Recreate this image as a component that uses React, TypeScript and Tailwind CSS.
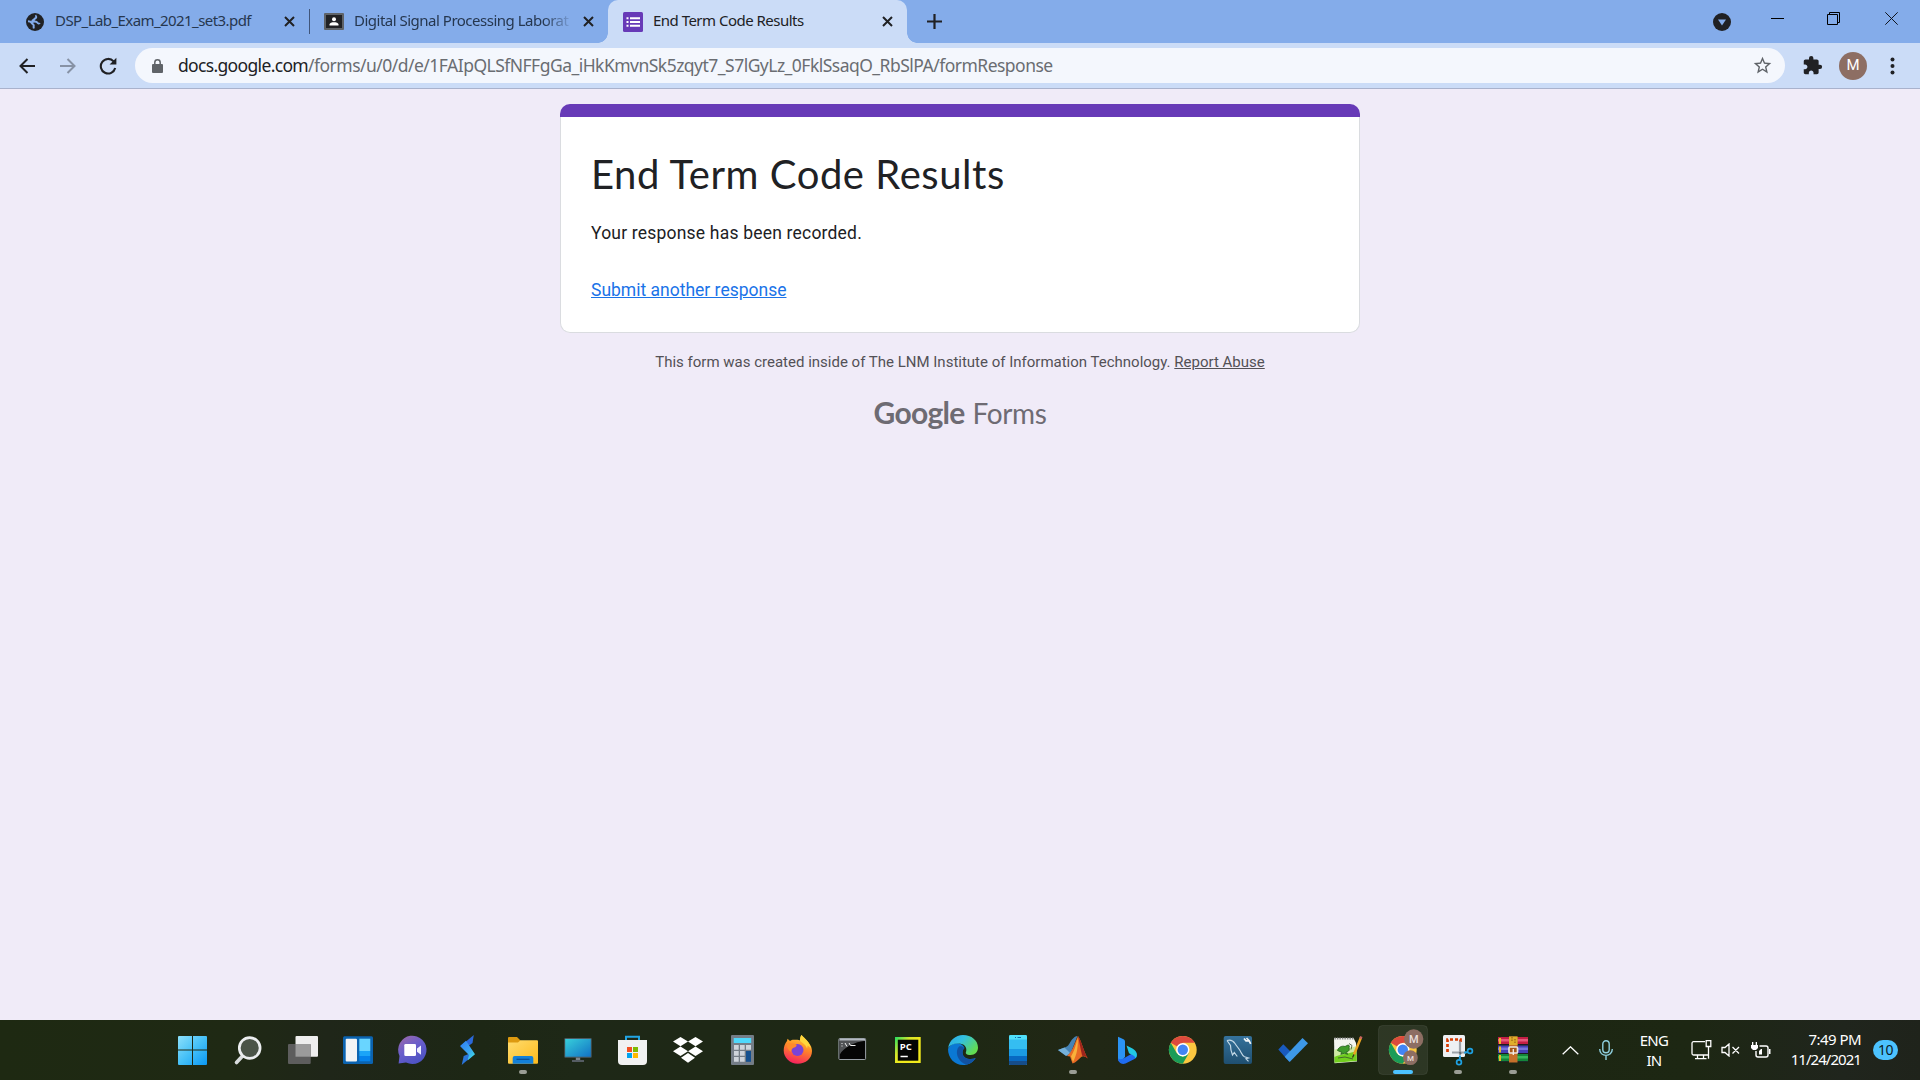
import type { ReactNode } from "react";

const segoe = "font-['Noto_Sans','Open_Sans',sans-serif]";

function CloseX() {
  return (
    <svg viewBox="0 0 11 11" className="h-[11px] w-[11px] shrink-0" stroke="#202124" strokeWidth="2">
      <path d="M1 1l9 9M10 1l-9 9" />
    </svg>
  );
}

function TabStrip() {
  return (
    <div className={`flex h-[43px] items-stretch bg-[#84acea] text-[15px] text-[#26374f] ${segoe}`}>
      <div className="flex w-[309px] items-center pl-[26px]">
        <svg viewBox="0 0 18 18" className="h-[18px] w-[18px] shrink-0">
          <circle cx="9" cy="9" r="9" fill="#202124" />
          <path
            d="M10.500 2.300C9 3 11.500 4.500 9.500 5.300 8 5.800 8.300 7 7 7.300c-1.200.3-.6 1.500.5 1.400 1.500-.2 3.300-.2 3.800 1 .5 1.100 2 .4 2.400 1.500M2 8.300c1.500 0 3 .4 3.700 1.700.6 1.200 2 1 2 2.300 0 1.200-.3 1.900.2 3.200"
            fill="none"
            stroke="#84acea"
            strokeWidth="2"
          />
        </svg>
        <span className="ml-[11px] w-[220px] whitespace-nowrap pb-[3px] tracking-[-0.57px]">
          DSP_Lab_Exam_2021_set3.pdf
        </span>
        <div className="ml-[9px]"><CloseX /></div>
      </div>
      <div className="mt-[9px] h-[25px] w-px bg-[#40557a]" />
      <div className="flex w-[298px] items-center pl-[14px]">
        <svg viewBox="0 0 20 17" className="h-[17px] w-5 shrink-0">
          <rect width="20" height="17" rx="1" fill="#5f6368" />
          <rect x="2" y="2" width="16" height="13" fill="#202124" />
          <circle cx="10" cy="6.200" r="2" fill="#fff" />
          <path d="M5.500 12.500v-1c0-1.700 2.500-2.300 4.500-2.300s4.500.6 4.500 2.300v1z" fill="#fff" />
        </svg>
        <span className="ml-[10px] w-[220px] overflow-hidden whitespace-nowrap pb-[3px] tracking-[-0.5px] [mask-image:linear-gradient(to_right,#000_86%,transparent)]">
          Digital Signal Processing Laborat
        </span>
        <div className="ml-[9px]"><CloseX /></div>
      </div>
      <div className="relative flex w-[299px] items-center rounded-t-[10px] bg-[#cbdcf7] pl-[15px] text-[#202124]">
        <div className="absolute -left-[10px] bottom-0 h-[10px] w-[10px] bg-[radial-gradient(circle_at_0_0,transparent_9.5px,#cbdcf7_10px)]" />
        <div className="absolute -right-[10px] bottom-0 h-[10px] w-[10px] bg-[radial-gradient(circle_at_100%_0,transparent_9.5px,#cbdcf7_10px)]" />
        <svg viewBox="0 0 20 20" className="h-5 w-5 shrink-0">
          <rect width="20" height="20" rx="1.500" fill="#673ab7" />
          <path d="M7 5.200h10v2H7zM7 9h10v2H7zM7 12.800h10v2H7zM3.500 5.200h2v2h-2zM3.500 9h2v2h-2zM3.500 12.800h2v2h-2z" fill="#fff" />
        </svg>
        <span className="ml-[10px] w-[220px] whitespace-nowrap pb-[3px] tracking-[-0.52px]">End Term Code Results</span>
        <div className="ml-[9px]"><CloseX /></div>
      </div>
      <svg viewBox="0 0 15 15" className="ml-[20px] mt-[14px] h-[15px] w-[15px]" stroke="#202124" strokeWidth="2.200">
        <path d="M7.500 0v15M0 7.500h15" />
      </svg>
      <svg viewBox="0 0 18 18" className="ml-auto mr-[40px] mt-[12.500px] h-[18px] w-[18px]">
        <circle cx="9" cy="9" r="9" fill="#202124" />
        <path d="M5 6.500h8l-4 6z" fill="#84acea" />
      </svg>
      <svg viewBox="0 0 13 13" className="mr-[43px] mt-[12px] h-[13px] w-[13px]" fill="#000">
        <rect y="6" width="13" height="1" />
      </svg>
      <svg viewBox="0 0 13 13" className="mr-[45px] mt-[12px] h-[13px] w-[13px]" fill="none" stroke="#000">
        <path d="M.5 2.500h10v10H.500zM2.500 2.500v-2h10v10h-2" />
      </svg>
      <svg viewBox="0 0 13 13" className="mr-[22px] mt-[12px] h-[13px] w-[13px]" fill="none" stroke="#10151d">
        <path d="M.3.3l12.400 12.400M12.700.3L.3 12.700" />
      </svg>
    </div>
  );
}

function Toolbar() {
  return (
    <div className="flex h-[45px] items-center bg-[#cbdcf7]">
      <svg viewBox="0 0 16 16" className="ml-[19px] h-4 w-4" fill="none" stroke="#202124" strokeWidth="2">
        <path d="M16 8H1.500M8.500 1L1.500 8l7 7" />
      </svg>
      <svg viewBox="0 0 16 16" className="ml-[25px] h-4 w-4" fill="none" stroke="#8792a5" strokeWidth="2">
        <path d="M0 8h14.500M7.500 1l7 7-7 7" />
      </svg>
      <svg viewBox="0 0 18 18" className="ml-[23px] h-[18px] w-[18px]">
        <path d="M14.600 4.400A7.300 7.300 0 1 0 16.200 11" fill="none" stroke="#202124" strokeWidth="2.100" />
        <path d="M17.400.8v6.800h-6.800z" fill="#202124" />
      </svg>
      <div className={`ml-[18px] flex h-[35px] w-[1650px] items-center rounded-full bg-[#f4f7fd] pl-[17px] pr-[12px] text-[17.5px] text-[#6a6d72] ${segoe}`}>
        <svg viewBox="0 0 11 14" className="h-[14px] w-[11px]">
          <path d="M2.800 6V3.500a2.700 2.700 0 0 1 5.400 0V6" fill="none" stroke="#5f6368" strokeWidth="1.500" />
          <rect y="5" width="11" height="9" rx="1" fill="#5f6368" />
        </svg>
        <span className="ml-[15px] whitespace-nowrap pb-px tracking-[-0.520px]">
          <span className="tracking-[-0.660px] text-[#202124]">docs.google.com</span>
          /forms/u/0/d/e/1FAIpQLSfNFFgGa_iHkKmvnSk5zqyt7_S7lGyLz_0FklSsaqO_RbSlPA/formResponse
        </span>
        <svg viewBox="0 0 24 24" className="ml-auto h-[21px] w-[21px]" fill="#5f6368">
          <path d="M22 9.240l-7.190-.62L12 2 9.190 8.630 2 9.240l5.460 4.730L5.820 21 12 17.270 18.180 21l-1.630-7.030L22 9.240zM12 15.400l-3.760 2.270 1-4.280-3.320-2.880 4.380-.38L12 6.100l1.710 4.040 4.380.38-3.320 2.880 1 4.280L12 15.400z" />
        </svg>
      </div>
      <svg viewBox="0 0 24 24" className="ml-[17px] h-[21px] w-[21px]" fill="#202124">
        <path d="M20.500 11H19V7c0-1.100-.9-2-2-2h-4V3.500a2.500 2.500 0 0 0-5 0V5H4c-1.100 0-1.990.9-1.990 2v3.800H3.500c1.490 0 2.700 1.210 2.700 2.700s-1.210 2.700-2.700 2.700H2V20c0 1.100.9 2 2 2h3.800v-1.500c0-1.490 1.210-2.700 2.700-2.700s2.700 1.210 2.700 2.700V22H17c1.100 0 2-.9 2-2v-4h1.500a2.500 2.500 0 0 0 0-5z" />
      </svg>
      <div className="ml-[16px] flex h-7 w-7 items-center justify-center rounded-full bg-[#8d6e63] font-['Roboto',sans-serif] text-[15px] text-white">
        M
      </div>
      <svg viewBox="0 0 4 18" className="ml-[23px] h-[18px] w-[5px]" fill="#202124">
        <circle cx="2" cy="2.500" r="2" />
        <circle cx="2" cy="9" r="2" />
        <circle cx="2" cy="15.500" r="2" />
      </svg>
    </div>
  );
}

function FormPage() {
  return (
    <main className="flex min-h-0 flex-1 flex-col items-center border-t border-[#a9b2cc] bg-[#f0ebf8] pt-[15px] font-['Roboto',sans-serif]">
      <section className="flex h-[229px] w-[800px] flex-col">
        <div className="h-[13px] rounded-t-[10px] bg-[#673ab7]" />
        <div className="flex-1 rounded-b-[10px] border border-t-0 border-[#dadce0] bg-white px-[30px] pt-[32px]">
          <h1 className="whitespace-nowrap font-['Lato',sans-serif] text-[40px] leading-[50px] tracking-[0.55px] text-[#202124]">
            End Term Code Results
          </h1>
          <p className="mt-[22px] text-[17.5px] leading-[25px] tracking-[0.2px] text-[#202124]">
            Your response has been recorded.
          </p>
          <p className="mt-[32px] text-[17.5px] leading-[25px] text-[#1a73e8]">
            <a className="underline">Submit another response</a>
          </p>
        </div>
      </section>
      <p className="mt-[19px] text-[15px] leading-[20px] text-[#535156]">
        This form was created inside of The LNM Institute of Information Technology.{" "}
        <a className="underline">Report Abuse</a>
      </p>
      <div className="mt-[20px] flex items-baseline gap-[8px] font-['Lato',sans-serif] leading-[40px] text-[#6e6b73]">
        <span className="text-[30px] font-bold tracking-[-0.700px]">Google</span>
        <span className="text-[28px] tracking-[-0.4px]">Forms</span>
      </div>
    </main>
  );
}

/* Every taskbar glyph is drawn in its own 55x60 cell. */
function Chrome() {
  return (
    <g>
      <circle cx="27.800" cy="29.800" r="13.900" fill="#fbc740" />
      <path d="M27.800 29.800L15.760 22.850A13.900 13.900 0 0 1 39.840 22.850H27.800z" fill="#dc4a3d" />
      <path d="M15.760 22.850A13.900 13.900 0 0 0 27.800 43.700L33.800 33.300 27.800 36.800 21.800 33.300z" fill="#1a9c58" />
      <circle cx="27.800" cy="29.800" r="6.700" fill="#fff" />
      <circle cx="27.800" cy="29.800" r="5.200" fill="#4285f4" />
    </g>
  );
}

const icons: { art: ReactNode; mark?: "open" | "active" }[] = [
  {
    art: (
      <path
        d="M13 17a1 1 0 0 1 1-1h13v13.500H13zM28 16h13a1 1 0 0 1 1 1v12.500H28zM13 30.500h14V45H14a1 1 0 0 1-1-1zM28 30.500h14V44a1 1 0 0 1-1 1H28z"
        fill="url(#win)"
      />
    ),
  },
  {
    art: (
      <g>
        <path d="M22.500 36L16.500 42.500" stroke="#d9dcdd" strokeWidth="3.600" strokeLinecap="round" />
        <circle cx="29.700" cy="28" r="10.400" fill="#4b5448" stroke="#eceef0" strokeWidth="2.700" />
      </g>
    ),
  },
  {
    art: (
      <g>
        <rect x="20.500" y="16" width="22.500" height="20.700" rx="1" fill="#eeeeee" />
        <rect x="13" y="24" width="22.700" height="20" rx="1" fill="#5d5d5d" />
        <path d="M20.500 24h15.200v12.700H20.500z" fill="#9b9b9b" />
      </g>
    ),
  },
  {
    art: (
      <g>
        <rect x="13" y="16.200" width="30" height="27.800" rx="1.500" fill="#0b63b0" />
        <rect x="15.700" y="18.700" width="11.300" height="22.700" rx="1" fill="#f1f3f5" />
        <path d="M29.300 18.700h11V31h-11z" fill="#69d5ff" />
        <path d="M29.300 31h11v5h-11z" fill="#1ba5f8" />
        <path d="M29.300 36h11v5.300h-11z" fill="#0583ec" />
      </g>
    ),
  },
  {
    art: (
      <g>
        <path d="M13.600 43.500l.9-7.500A14.200 14.200 0 1 1 21 42.600z" fill="url(#chat)" />
        <rect x="19.300" y="24" width="11.700" height="12" rx="1.300" fill="#fff" />
        <path d="M32 28.500l4-3v9.300l-4-3z" fill="#eef0ff" />
      </g>
    ),
  },
  {
    art: (
      <g>
        <path d="M33.800 15l-1.300 8-5 3.700-6-1.500z" fill="#2b68d8" />
        <path d="M21.700 45l2-9 6-2.500 4.500.8z" fill="#2a75da" />
        <path d="M20 26l6-5.300 9 13.600-7.500 6.200 1.500-5.500z" fill="url(#bolt)" />
      </g>
    ),
  },
  {
    mark: "open",
    art: (
      <g>
        <path d="M13 18a1 1 0 0 1 1-1h8l3.500 3.500V25H13z" fill="#dd9a10" />
        <path d="M13 22.500h10l2.500-2.200H42a1 1 0 0 1 1 1v21.400a1 1 0 0 1-1 1H14a1 1 0 0 1-1-1z" fill="url(#folder)" />
        <path d="M17.700 43.700V38a2 2 0 0 1 2-2h16.600a2 2 0 0 1 2 2v5.700z" fill="#1380d8" />
        <path d="M21.500 39.300h13" stroke="#0a4c92" strokeWidth="1.200" />
      </g>
    ),
  },
  {
    art: (
      <g>
        <path d="M25.800 37h4.400v4h-4.400z" fill="#7d858b" />
        <path d="M22 40h12v2H22z" fill="#555c63" />
        <rect x="14.300" y="18" width="27.400" height="19.700" rx="1" fill="#4a5961" />
        <rect x="15.200" y="19" width="25.600" height="17.700" fill="url(#screen)" />
      </g>
    ),
  },
  {
    art: (
      <g>
        <path d="M21 21v-4.300h13V21" fill="none" stroke="#22a5e4" strokeWidth="2" />
        <path d="M13 20h29v21a4 4 0 0 1-4 4H17a4 4 0 0 1-4-4z" fill="#f1f1f1" />
        <path d="M22 27h5v5h-5z" fill="#f25022" />
        <path d="M28 27h5v5h-5z" fill="#7fba00" />
        <path d="M22 33h5v5h-5z" fill="#00a4ef" />
        <path d="M28 33h5v5h-5z" fill="#ffb900" />
      </g>
    ),
  },
  {
    art: (
      <path
        d="M20.500 17l7.500 4.500-7.500 4.700-7.500-4.700zM35.500 17l7.500 4.500-7.500 4.700-7.500-4.700zM20.500 26.600l7.500 4.600-7.500 4.700-7.500-4.700zM35.500 26.600l7.500 4.600-7.500 4.700-7.500-4.700zM28 33l7 4.700-7 5-7-5z"
        fill="#fff"
      />
    ),
  },
  {
    art: (
      <g>
        <rect x="16" y="15" width="23" height="30" rx="1" fill="#747d87" />
        <path d="M18.700 18h17.500v5H18.700z" fill="#4fd8fb" />
        <path d="M19 25h4.700v4.700H19zM25 25h4.700v4.700H25zM31 25h5v4.700h-5zM19 31h4.700v4.700H19zM25 31h4.700v4.700H25zM19 37h4.700v4.700H19zM25 37h4.700v4.700H25z" fill="#ced4db" />
        <path d="M31 31h5v10.800h-5z" fill="#15508f" />
      </g>
    ),
  },
  {
    art: (
      <g>
        <path d="M31.500 15c1 1.500 4.500 4.500 7 7.500 2.500 3 3.500 5.800 3.500 8.500 0 7.500-6.300 12.700-14.200 12.700S13.700 37.700 13.700 30.500c0-4 1.300-7 3.300-9.500l.5-2.300 2.500 2.300c1.500-1.300 3-1.500 4.500-1.300 3-.2 5 .3 5.500.5 0-2 .5-4 1.500-5.200z" fill="url(#fox)" />
        <circle cx="27.500" cy="30" r="6" fill="#7a43d6" />
        <path d="M17 23c3 1.500 6-.5 9 1.500 1.500 1 0 2.800-2.500 3.300-1.500.8-2.500 2-2.300 4-3-1-4.700-5-4.200-8.800z" fill="#ff8a2b" />
        <path d="M31.500 15c3 3.500 8.500 6.500 9.500 14-1-2-2.500-3-3.500-3.500 0 1.300 0 2-.5 3-.8-3.500-4.500-5.500-6.800-7.500-.3-2 .3-4.500 1.300-6z" fill="#ffd63c" />
      </g>
    ),
  },
  {
    art: (
      <g>
        <rect x="13.900" y="18.500" width="26.700" height="21" rx=".8" fill="#050505" stroke="#9aa1a8" />
        <path d="M14.500 19h25.600v1.800H14.500z" fill="#b4bac2" />
        <path d="M14.500 20.800h25.600C30 22 19 27 14.500 35z" fill="#515356" />
        <path d="M16.500 23.500h1M16.500 26h1M20 23l2 3.500M24 23l1.500 2.500h5" stroke="#f2f2f2" fill="none" />
      </g>
    ),
  },
  {
    art: (
      <g>
        <rect x="15" y="17" width="25.700" height="26" fill="url(#pc)" />
        <rect x="17.800" y="19.700" width="20.500" height="21" fill="#040504" />
        <text x="19.800" y="29.800" fontSize="9.500" fontWeight="700" fill="#fff" fontFamily="Open Sans, sans-serif">PC</text>
        <path d="M20.500 36.500h7.300" stroke="#fff" strokeWidth="1.500" />
      </g>
    ),
  },
  {
    art: (
      <g>
        <path d="M13 29c0 9 6.500 16 15 16 5.500 0 10-2.500 12.700-7-5 2.300-13.200 1-13.200-5.500 0-2 .8-3.500 2-4.500-2-6-13-7-16.500 1z" fill="#0b78d4" />
        <path d="M13.200 28C14.200 20.500 20.500 15 28 15c8.500 0 15 5.500 15 12.500 0 4.500-3 7.500-7.500 7.500-4 0-5.300-1.500-4.500-3 1.300-3-.5-8-6.500-8.500-5-.5-9.300 1-11.300 4.500z" fill="url(#edge)" />
        <path d="M24 26.500c-4.500 5-2 15 7.500 18.200 4-.8 7.300-3.300 9.200-6.700-5 2.300-13.200 1-13.200-5.500 0-2 .8-3.500 2-4.500-1.500-1.500-3.500-2-5.500-1.500z" fill="#1152a3" />
      </g>
    ),
  },
  {
    art: (
      <g>
        <rect x="19" y="15" width="18" height="30" rx="1.300" fill="#50e0fb" />
        <path d="M19 19.500h18V29H19z" fill="#35bdf1" />
        <path d="M19 29h18v7H19z" fill="#1b9be4" />
        <path d="M19 36h18v5H19z" fill="#0869c2" />
        <path d="M19 41h18v3a1 1 0 0 1-1 1H20a1 1 0 0 1-1-1z" fill="#164d8a" />
        <path d="M25 17.500h1M27.500 17.500h3.500" stroke="#1268a8" />
      </g>
    ),
  },
  {
    mark: "open",
    art: (
      <g>
        <path d="M13 30l8-3c2.500-.7 3.500-4 6-7.500 1.800-2 3.500-3.300 5.500-3.500l-7 17.500-3.500 2.500z" fill="#4683b5" />
        <path d="M13 30l6.500-2.500L25 33l-4 3z" fill="#74b0da" />
        <path d="M33 16c3 3.500 5.500 15 9.700 22.500-3-2.500-4.500-3-6.500-1.500-3 2.500-5 5.500-8.700 6.500l-2.500-7-3-.5c4.500-3 7.500-12 11-20z" fill="#e76a25" />
        <path d="M33 16c3 3.500 5.500 15 9.700 22.500-3-2.500-4.500-3-5.500-2.500C35.500 29 34.500 22 33 16z" fill="#9e241c" />
        <path d="M32.500 18c1 7-.5 17-4.500 24l-2-5.500c3-5 5-11 6.500-18.500z" fill="#f9b13a" />
      </g>
    ),
  },
  {
    art: (
      <g>
        <path d="M18 16.700l5.500 2.500c1 .5 1.500 1.300 1.500 2.500v15L21 42c-2 0-3-1.500-3-3z" fill="#2b93f3" />
        <path d="M18 38c0 4.500 3.500 7 7.500 5.500L34.500 39c3-2 3-5.500 1-7.500l-12 7c-2.500 1-5 1-5.500-.5z" fill="#1f6cf0" />
        <path d="M26.500 25.500l6 3c4 2 5.800 7 3 10-.3-2-1.500-2.700-3.500-3.700l-3-1.500z" fill="#22c9e4" />
      </g>
    ),
  },
  { art: <Chrome /> },
  {
    art: (
      <g>
        <rect x="13.700" y="16" width="28.300" height="28" rx="2" fill="url(#sql)" />
        <path d="M17 20.500c3-1 6 0 8 3 1.500 2.500 3.500 4.500 5 7 1.500 2.500 2 5 4.500 6.200l4 1.300-2.500.8 2.500 2.500M17 20.500l3.500 5c0 3 .5 6 2 9.500l1.800-2.500 3 4" fill="none" stroke="#c4d9e7" strokeWidth="1.200" />
        <path d="M34 18.500l2 2.300h3.200l1.500 3M36.500 18l2.500 2.500" stroke="#f1f5f8" strokeWidth="1.700" fill="none" />
      </g>
    ),
  },
  {
    art: (
      <g>
        <path d="M13.300 29.500l5-5.300L29 35l-5 6.500z" fill="#195abe" />
        <path d="M24.700 42l-5-5.300L37.500 18l5.500 5.300z" fill="#3d98e8" />
      </g>
    ),
  },
  {
    art: (
      <g>
        <path d="M14 18h19.500l2.500 5 1 18.500L14.500 43.300z" fill="#f4f6f0" />
        <path d="M14.400 36c6-3 14-3 22.200-6l.3 11-22.400 1.800z" fill="#72cf1f" />
        <path d="M14.300 30c6-3 14-1 21.900-4l.3 5c-8 3-16 3-22.100 6z" fill="#cdeaa0" />
        <path d="M14.400 18.500h19" stroke="#8b8d8b" strokeDasharray="1.500 1" strokeWidth="2" />
        <path d="M17.500 30.500c1-3.500 4.500-5 7.500-4l3-1.500c1.300 0 1.800 1.500 1 2.800 1 2.500-.8 4-3 4.500l1.800 2-3.500-1-3.500 1 1-2z" fill="#3f9b2a" stroke="#1e5916" strokeWidth=".8" />
        <path d="M18 38l7-1 8 2M29 23.500l3 2-1 4" stroke="#38512d" fill="none" strokeWidth=".8" />
        <path d="M41 17.500l-7 17" stroke="#e9a320" strokeWidth="2.500" />
        <path d="M41.300 16.500l-.8 2.200" stroke="#c7635f" strokeWidth="2.500" />
        <path d="M34 34.500l-1.500 3" stroke="#3a2c19" strokeWidth="1.300" />
      </g>
    ),
  },
  {
    mark: "active",
    art: (
      <g>
        <rect x="3.500" y="5.500" width="49" height="49" rx="4" fill="#fff" fillOpacity=".08" stroke="#fff" strokeOpacity=".07" />
        <Chrome />
        <circle cx="38.700" cy="19" r="9.700" fill="#8d6e63" />
        <circle cx="35.400" cy="37.700" r="7.400" fill="#8d6e63" />
        <g fill="#e9dfdb" textAnchor="middle" fontFamily="Roboto, sans-serif">
          <text x="38.700" y="23" fontSize="11" fontWeight="500">M</text>
          <text x="35.400" y="40.700" fontSize="8" fontWeight="500">M</text>
        </g>
      </g>
    ),
  },
  {
    mark: "open",
    art: (
      <g>
        <rect x="13" y="15" width="22" height="22" rx="1.500" fill="#eef0f3" />
        <path d="M17.500 32v-12.500H30.500V23" fill="none" stroke="#d83b01" strokeWidth="2.700" strokeDasharray="3 2" />
        <path d="M30 21.500V35M22 32.500h14" stroke="#9da3aa" strokeWidth="2.200" />
        <path d="M29.500 33.500l1.500-1" stroke="#5f666d" strokeWidth="2.500" />
        <circle cx="40" cy="31" r="2.400" fill="none" stroke="#1fa1e2" strokeWidth="1.700" />
        <circle cx="29" cy="42.300" r="2.400" fill="none" stroke="#1fa1e2" strokeWidth="1.700" />
        <path d="M37.700 32l-3.500.7M29.700 40l.3-4.500" stroke="#1fa1e2" strokeWidth="2" />
      </g>
    ),
  },
  {
    mark: "open",
    art: (
      <g>
        <path d="M13 17h30v8H13z" fill="#c41f45" />
        <path d="M13 19h30v2.500H13z" fill="#e5597a" />
        <path d="M13 25.500h30v8H13z" fill="#4540b5" />
        <path d="M13 27.500h30V30H13z" fill="#7673dc" />
        <path d="M13 34h30v8H13z" fill="#14863a" />
        <path d="M13 36h30v2.500H13z" fill="#37b65c" />
        <path d="M13 24.500h30M13 33.500h30M13 41.700h30" stroke="#1d1a24" />
        <path d="M15 18v6M15 26.500v6M15 35v6" stroke="#e8b929" strokeWidth="2" />
        <path d="M24 16.500h8.500v26H24z" fill="#c5702a" />
        <path d="M24 16.500h8.500V25H24z" fill="#e0ae2b" />
        <path d="M27 17v5M30 19v5" stroke="#8a5210" strokeDasharray="1.500 1" />
        <rect x="24" y="27" width="8.500" height="6" rx="1" fill="#a65718" stroke="#e9e6df" strokeWidth="1.700" />
        <path d="M28.300 29v6" stroke="#f4f0e8" strokeWidth="1.300" />
      </g>
    ),
  },
];

function Defs() {
  return (
    <svg className="h-0 w-0 shrink-0">
      <defs>
        <linearGradient id="win" gradientUnits="userSpaceOnUse" x1="13" y1="16" x2="42" y2="45">
          <stop stopColor="#8de0fb" /><stop offset=".5" stopColor="#45c0f7" /><stop offset="1" stopColor="#0a98f5" />
        </linearGradient>
        <linearGradient id="chat" x1="0" y1="0" x2=".6" y2="1">
          <stop stopColor="#a26aa5" /><stop offset=".5" stopColor="#6a5ecb" /><stop offset="1" stopColor="#4d53c4" />
        </linearGradient>
        <linearGradient id="bolt" x1="0" y1="0" x2="1" y2="1">
          <stop stopColor="#2f7df0" /><stop offset=".55" stopColor="#3aa4f2" /><stop offset="1" stopColor="#3fe8df" />
        </linearGradient>
        <linearGradient id="folder" x1="0" y1="0" x2="1" y2="1">
          <stop stopColor="#ffdc6e" /><stop offset="1" stopColor="#fdba1c" />
        </linearGradient>
        <linearGradient id="screen" x1="0" y1="0" x2="1" y2="1">
          <stop stopColor="#37cfdb" /><stop offset="1" stopColor="#1272c4" />
        </linearGradient>
        <linearGradient id="fox" x1=".7" y1="0" x2=".4" y2="1">
          <stop stopColor="#ffd53a" /><stop offset=".45" stopColor="#ff8a27" /><stop offset="1" stopColor="#f5215e" />
        </linearGradient>
        <linearGradient id="pc" x1="0" y1="0" x2=".6" y2=".5">
          <stop stopColor="#21e063" /><stop offset=".6" stopColor="#d6e62a" /><stop offset="1" stopColor="#f1ea1c" />
        </linearGradient>
        <linearGradient id="edge" x1="0" y1="0" x2="1" y2=".6">
          <stop stopColor="#2aa9e6" /><stop offset=".45" stopColor="#33c0e0" /><stop offset="1" stopColor="#63dc50" />
        </linearGradient>
        <linearGradient id="sql" x1="0" y1="0" x2="0" y2="1">
          <stop stopColor="#35729c" /><stop offset="1" stopColor="#1f4f70" />
        </linearGradient>
      </defs>
    </svg>
  );
}

function Taskbar() {
  return (
    <footer
      className={`flex h-[60px] items-center bg-[linear-gradient(90deg,#1e2912_0%,#1f2914_12%,#1f2619_17%,#1d2715_25%,#1e2817_30%,#1e2814_50%,#212715_57%,#1c2612_75%,#1d2713_88%,#20251d_96%,#1f231b_100%)] pl-[165px] text-[15px] leading-[20px] text-white ${segoe}`}
    >
      <Defs />
      {icons.map((icon, i) => (
        <svg key={i} viewBox="0 0 55 60" className="h-[60px] w-[55px] shrink-0">
          {icon.art}
          {icon.mark === "open" && <rect x="24" y="50" width="8" height="4" rx="2" fill="#9a9d95" />}
          {icon.mark === "active" && <rect x="18" y="50" width="20" height="4" rx="2" fill="#4cc2ff" />}
        </svg>
      ))}
      <svg viewBox="0 0 17 9" className="ml-[22px] h-[9px] w-[17px]" fill="none" stroke="#fff" strokeWidth="1.300">
        <path d="M.7 8.300l7.800-7.500 7.800 7.500" />
      </svg>
      <svg viewBox="0 0 14 20" className="ml-[20px] h-5 w-[14px]" fill="none" stroke="#8fd0df" strokeWidth="1.400">
        <rect x="3.800" y=".7" width="6.400" height="12" rx="3.200" />
        <path d="M.7 9c0 8.500 12.600 8.500 12.600 0M7 15.500V20" />
      </svg>
      <div className="-mt-px ml-[24px] w-[34px] text-center tracking-[-0.7px]">
        <div>ENG</div>
        <div>IN</div>
      </div>
      <svg viewBox="0 0 21 20" className="ml-[20px] h-5 w-[21px]" fill="none" stroke="#fff" strokeWidth="1.300">
        <path d="M14 1.700H2.500a1.500 1.500 0 0 0-1.500 1.500v10.300a1.500 1.500 0 0 0 1.500 1.500H18M6.500 15v3.500M12.500 15v3.500M4 18.700h11.500M15.200.7h4.600v5.800h-4.600zM17.500 6.500v12.200" />
      </svg>
      <svg viewBox="0 0 19 14" className="ml-[9px] h-[14px] w-[19px]" fill="none" stroke="#fff" strokeWidth="1.300">
        <path d="M1 4.500h3L8 1v12L4 9.500H1zM11.500 4l6.500 6.500M18 4l-6.500 6.500" />
      </svg>
      <svg viewBox="0 0 20 17" className="ml-[11px] h-[17px] w-5">
        <path d="M8.500 4H15a2 2 0 0 1 2 2v7a2 2 0 0 1-2 2H7a2 2 0 0 1-2-2V9" fill="none" stroke="#fff" strokeWidth="1.400" />
        <path d="M18 7h1.500v5H18zM8 12.500V9l2-2h1v5.500zM0 3h7v3L5 8H2L0 6zM1 0h1.300v3H1zM4.700 0H6v3H4.700z" fill="#fff" />
      </svg>
      <div className="-mt-[2px] ml-auto pl-3 text-right">
        <div className="tracking-[-0.550px]">7:49 PM</div>
        <div className="tracking-[-0.950px]">11/24/2021</div>
      </div>
      <div className="ml-[12px] mr-[22px] flex h-5 w-[25px] items-center justify-center rounded-full bg-[#4cc2ff] text-[14px] tracking-[-0.5px] text-[#0b1a24]">
        10
      </div>
    </footer>
  );
}

export default function App() {
  return (
    <div className="flex h-[1080px] w-[1920px] flex-col overflow-hidden">
      <TabStrip />
      <Toolbar />
      <FormPage />
      <Taskbar />
    </div>
  );
}
